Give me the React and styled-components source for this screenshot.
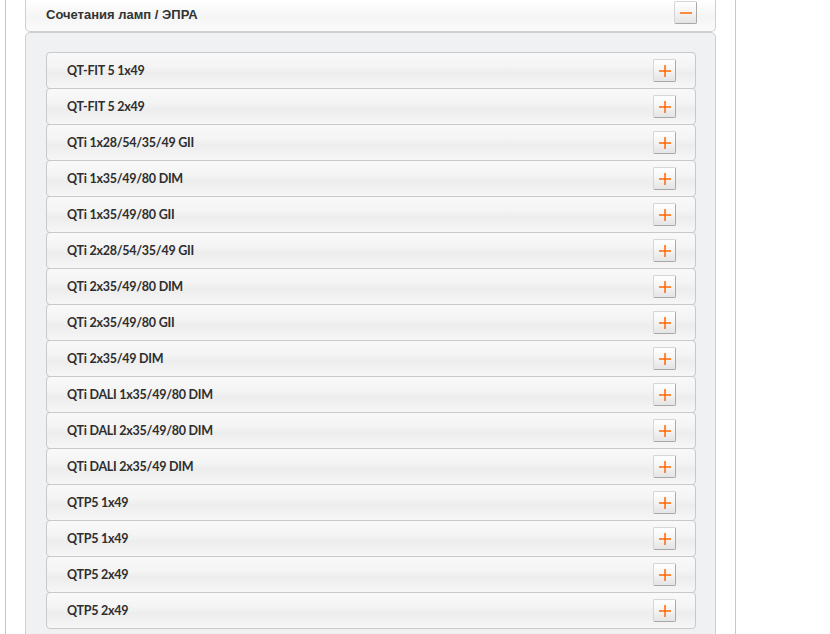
import React from "react";
import styled, { createGlobalStyle } from "styled-components";

const Global = createGlobalStyle`
  html, body { margin: 0; padding: 0; background: #fff; }
  body { font-family: "Liberation Sans", Arial, sans-serif; overflow: hidden; }
`;

const Page = styled.div`
  margin-left: 5px;
  width: 731px;
  border-left: 1px solid #c8c8c8;
  border-right: 1px solid #c8c8c8;
  background: #fff;
  padding: 0 19px 40px 19px;
  box-sizing: border-box;
`;

const Header = styled.div`
  display: flex;
  align-items: flex-start;
  justify-content: space-between;
  height: 32px;
  box-sizing: border-box;
  padding: 1px 18px 0 20px;
  border: 1px solid #cfcfcf;
  border-top: none;
  border-radius: 0 0 5px 5px;
  background: linear-gradient(to bottom, #ffffff 0%, #f5f5f5 55%, #fbfbfb 100%);
`;

const HeaderTitle = styled.span`
  font-family: "Liberation Sans", Arial, sans-serif;
  font-weight: bold;
  font-size: 13px;
  line-height: 23px;
  padding-top: 2px;
  color: #333;
`;

const ToggleButton = styled.span`
  display: flex;
  align-items: center;
  justify-content: center;
  width: 23px;
  height: 23px;
  box-sizing: border-box;
  border: 1px solid #d6d6d6;
  border-right-color: #a9a9a9;
  border-bottom-color: #a9a9a9;
  border-radius: 2px;
  background: linear-gradient(to bottom, #ffffff 0%, #f4f4f4 50%, #e4e4e4 100%);
  flex-shrink: 0;
`;

const Body = styled.div`
  border: 1px solid #cfcfcf;
  border-radius: 5px 5px 0 0;
  background: #f0f1f3;
  padding: 19px 19px 20px 20px;
  display: flex;
  flex-direction: column;
`;

const Row = styled.div`
  display: flex;
  align-items: center;
  justify-content: space-between;
  height: 37px;
  box-sizing: border-box;
  padding: 0 19px 0 20px;
  border: 1px solid #c9c9c9;
  border-radius: 4px;
  background: linear-gradient(to bottom, #f9f9f9 0%, #f4f4f4 40%, #ededed 58%, #f6f6f6 100%);
  & + & { margin-top: -1px; }
`;

const RowTitle = styled.span`
  font-family: Lato, "Open Sans", sans-serif;
  font-weight: bold;
  font-size: 12.5px;
  letter-spacing: -0.25px;
  color: #2e2e2e;
`;

const Minus = () => (
  <svg width="14" height="14" viewBox="0 0 14 14">
    <line x1="1" y1="7" x2="13" y2="7" stroke="#ff6600" strokeWidth="1.5" />
  </svg>
);

const Plus = () => (
  <svg width="14" height="14" viewBox="0 0 14 14">
    <line x1="1" y1="7" x2="13" y2="7" stroke="#ff6600" strokeWidth="1.5" />
    <line x1="7" y1="1" x2="7" y2="13" stroke="#ff6600" strokeWidth="1.5" />
  </svg>
);

const items = [
  "QT-FIT 5 1x49",
  "QT-FIT 5 2x49",
  "QTi 1x28/54/35/49 GII",
  "QTi 1x35/49/80 DIM",
  "QTi 1x35/49/80 GII",
  "QTi 2x28/54/35/49 GII",
  "QTi 2x35/49/80 DIM",
  "QTi 2x35/49/80 GII",
  "QTi 2x35/49 DIM",
  "QTi DALI 1x35/49/80 DIM",
  "QTi DALI 2x35/49/80 DIM",
  "QTi DALI 2x35/49 DIM",
  "QTP5 1x49",
  "QTP5 1x49",
  "QTP5 2x49",
  "QTP5 2x49",
];

export default function App() {
  return (
    <>
      <Global />
      <Page>
        <Header>
          <HeaderTitle>Сочетания ламп / ЭПРА</HeaderTitle>
          <ToggleButton><Minus /></ToggleButton>
        </Header>
        <Body>
          {items.map((t, i) => (
            <Row key={i}>
              <RowTitle>{t}</RowTitle>
              <ToggleButton><Plus /></ToggleButton>
            </Row>
          ))}
        </Body>
      </Page>
    </>
  );
}
